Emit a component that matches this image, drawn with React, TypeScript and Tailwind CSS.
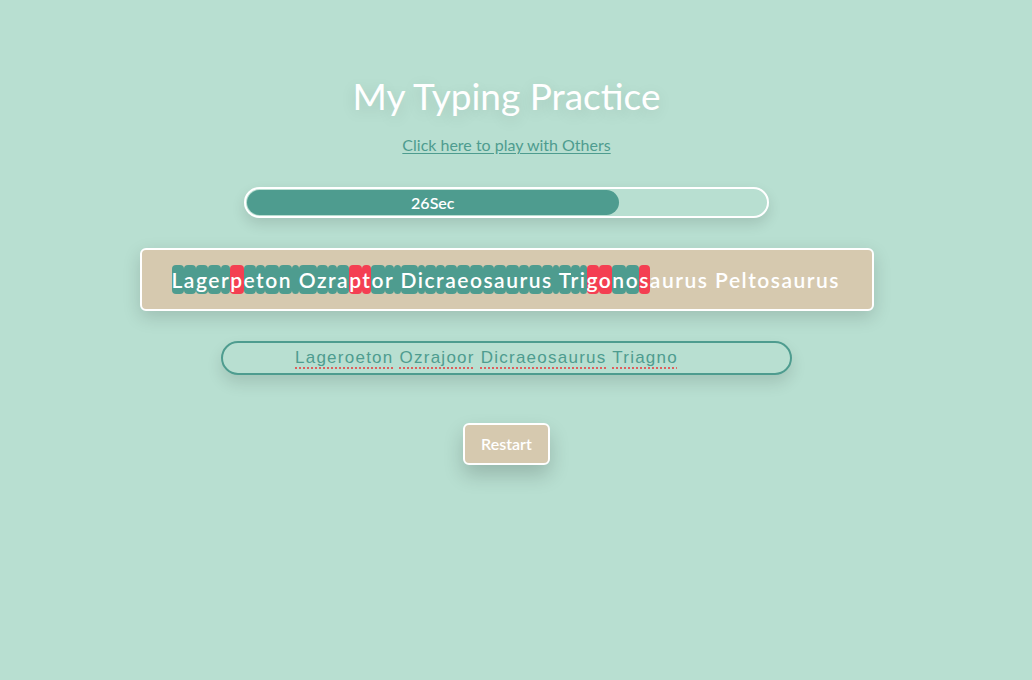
import React from "react";

const sentence = "Lagerpeton Ozraptor Dicraeosaurus Trigonosaurus Peltosaurus";
const typed = "Lageroeton Ozrajoor Dicraeosaurus Triagno ";

export default function App() {
  return (
    <div
      className="min-h-screen w-full bg-[#b8dfd1] flex flex-col items-center pt-[72px] pr-[19px]"
      style={{ fontFamily: "Lato, 'Noto Sans', sans-serif" }}
    >
      <h1 className="text-[37px] leading-[48px] text-white [text-shadow:0_4px_16px_rgba(0,0,0,0.12)]">
        My Typing Practice
      </h1>
      <a href="#" className="mt-[15px] text-[16px] leading-5 text-[#4e9c8f] underline underline-offset-2">
        Click here to play with Others
      </a>

      {/* timer bar */}
      <div className="mt-[32px] w-[525px] h-[31px] rounded-full border-2 border-white p-[1px] shadow-[0_6px_14px_rgba(0,0,0,0.12)]">
        <div className="w-[71.6%] h-full rounded-full bg-[#4e9c8f] flex items-center justify-center text-white text-[16px] font-semibold">
          26Sec
        </div>
      </div>

      {/* sentence to type */}
      <div className="mt-[30px] w-[734px] h-[63px] rounded-md border-2 border-white bg-[#d6c9af] flex items-center pl-[30px] shadow-[0_6px_18px_rgba(0,0,0,0.15)]">
        <p className="text-[21px] font-semibold text-white tracking-[1.5px] whitespace-pre leading-[30px]">
          {sentence.split("").map((ch, i) => {
            let cls = "";
            if (i < typed.length) {
              cls = ch === typed[i] ? "bg-[#4e9c8f]" : "bg-[#f43f52]";
            }
            return (
              <span key={i} className={`${cls} rounded-[4px] py-[2px]`}>
                {ch}
              </span>
            );
          })}
        </p>
      </div>

      {/* typed input */}
      <div
        className="mt-[30px] w-[571px] h-[34px] rounded-full border-2 border-[#4e9c8f] flex items-center pl-[72px] text-[17px] text-[#4e9c8f] tracking-[1.25px] shadow-[0_8px_16px_rgba(0,0,0,0.12)]"
        style={{ fontFamily: "'Liberation Sans', Arial, sans-serif" }}
      >
        <span className="whitespace-pre">
          {typed.trim().split(" ").map((w, i) => (
            <React.Fragment key={i}>
              {i > 0 && " "}
              <span className="underline decoration-dotted decoration-[#e24a4a] underline-offset-[4px]">{w}</span>
            </React.Fragment>
          ))}
        </span>
      </div>

      <button className="mt-[48px] w-[87px] h-[42px] rounded-md border-2 border-white bg-[#d6c9af] text-white text-[16px] font-semibold shadow-[0_10px_20px_rgba(0,0,0,0.18)]">
        Restart
      </button>
    </div>
  );
}
